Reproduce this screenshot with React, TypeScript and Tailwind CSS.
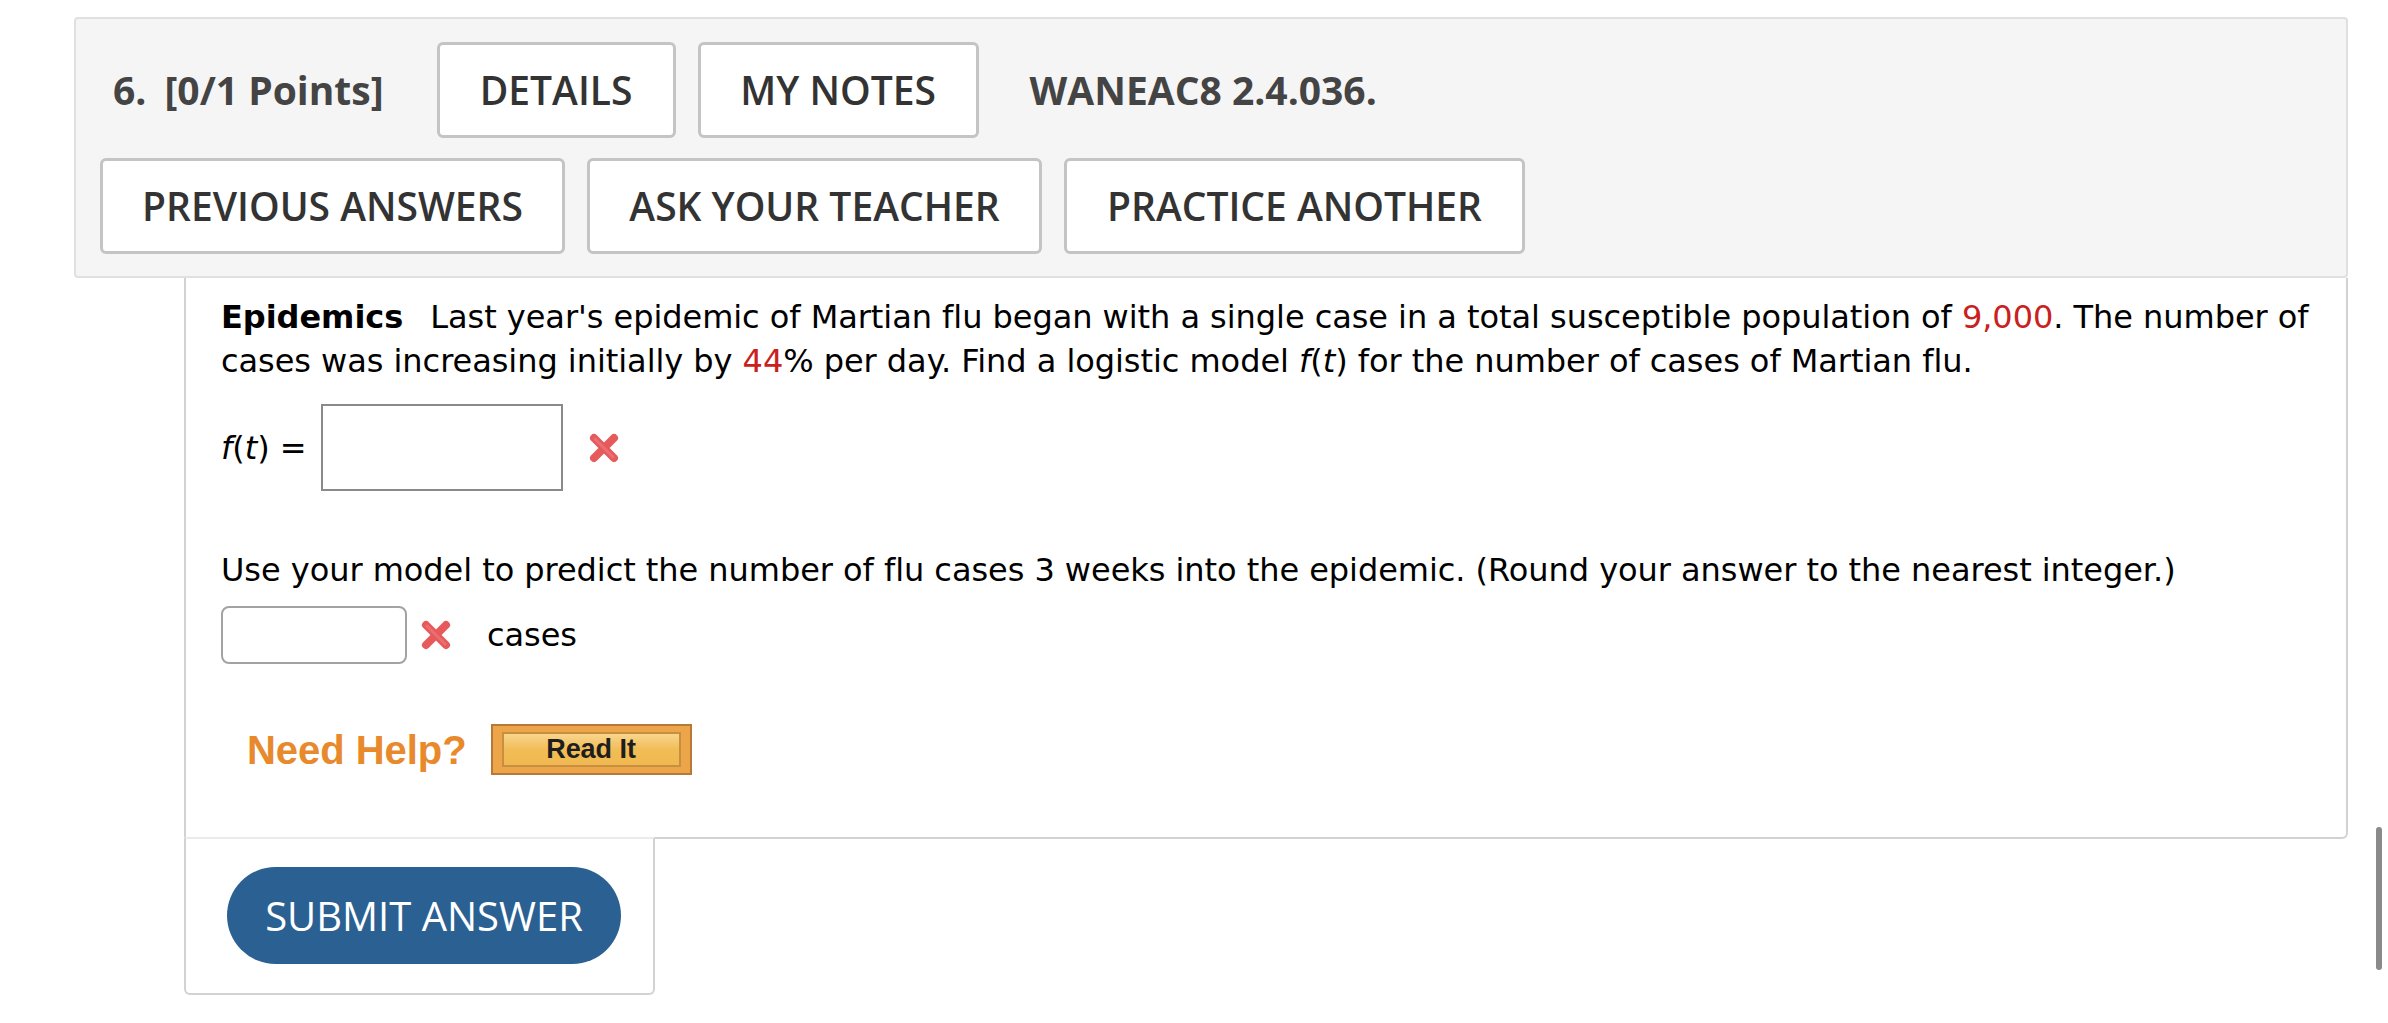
import React from 'react';

const headerFont = { fontFamily: '"Open Sans", "Noto Sans", sans-serif' };
const bodyFont = { fontFamily: '"DejaVu Sans", Verdana, sans-serif' };
const arialFont = { fontFamily: '"Liberation Sans", Arial, sans-serif' };

function ToolButton({ label, width }: { label: string; width: string }) {
  return (
    <div
      className={`${width} h-[96px] flex items-center justify-center bg-white border-[3px] border-[#c4c4c4] rounded-[6px] text-[39px] font-semibold text-[#333]`}
    >
      {label}
    </div>
  );
}

function WrongMark() {
  return (
    <svg width="34" height="32" viewBox="0 0 34 32" className="shrink-0">
      <g stroke="#e65a5c" strokeWidth="8" strokeLinecap="round">
        <line x1="7" y1="6" x2="27" y2="26" />
        <line x1="27" y1="6" x2="7" y2="26" />
      </g>
      <g stroke="#f07c7e" strokeWidth="3" strokeLinecap="round" opacity="0.6">
        <line x1="8" y1="7" x2="26" y2="25" />
      </g>
    </svg>
  );
}

export default function App() {
  return (
    <div className="relative w-full h-[1023px] bg-white overflow-hidden">
      {/* question header */}
      <div
        className="ml-[74px] mt-[17px] w-[2274px] h-[261px] bg-[#f5f5f5] border-2 border-[#e0e0e0] rounded-[4px] pt-[23px] pl-[24px]"
        style={headerFont}
      >
        <div className="flex items-center h-[96px]">
          <span className="ml-[13px] text-[39px] font-bold text-[#444]">6.</span>
          <span className="ml-[18px] text-[39px] font-bold text-[#444]">[0/1 Points]</span>
          <div className="ml-[53px] flex gap-[22px]">
            <ToolButton label="DETAILS" width="w-[239px]" />
            <ToolButton label="MY NOTES" width="w-[281px]" />
          </div>
          <span className="ml-[51px] text-[39px] font-bold text-[#444]">WANEAC8 2.4.036.</span>
        </div>
        <div className="mt-[20px] flex gap-[22px]">
          <ToolButton label="PREVIOUS ANSWERS" width="w-[465px]" />
          <ToolButton label="ASK YOUR TEACHER" width="w-[455px]" />
          <ToolButton label="PRACTICE ANOTHER" width="w-[461px]" />
        </div>
      </div>

      {/* question body */}
      <div
        className="ml-[184px] w-[2164px] border-x-2 border-b-2 border-[#d2d2d2] rounded-br-[6px] pl-[35px] pt-[17px] pb-[62px] text-[32px] tracking-[-0.05px] text-black"
        style={bodyFont}
      >
        <p className="leading-[44px]">
          <b>Epidemics</b>
          <span className="ml-[27px]">Last year's epidemic of Martian flu began with a single case in a total susceptible population of </span>
          <span className="text-[#c9211e]">9,000</span>. The number of cases was increasing initially by{' '}
          <span className="text-[#c9211e]">44</span>% per day. Find a logistic model <i>f</i>(<i>t</i>) for the number of cases of Martian flu.
        </p>

        <div className="mt-[21px] flex items-center h-[87px]">
          <span>
            <i>f</i>(<i>t</i>) =
          </span>
          <div className="ml-[15px] w-[242px] h-[87px] bg-white border-2 border-[#8a8a8a]" />
          <div className="ml-[24px]">
            <WrongMark />
          </div>
        </div>

        <p className="mt-[57px] leading-[44px]">
          Use your model to predict the number of flu cases 3 weeks into the epidemic. (Round your answer to the nearest integer.)
        </p>

        <div className="mt-[14px] flex items-center h-[58px]">
          <div className="w-[186px] h-[58px] bg-white border-2 border-[#a3a3a3] rounded-[8px]" />
          <div className="ml-[12px]">
            <WrongMark />
          </div>
          <span className="ml-[34px]">cases</span>
        </div>

        <div className="mt-[60px] flex items-center h-[51px]">
          <span className="ml-[26px] text-[40px] font-bold text-[#e8892c]" style={arialFont}>
            Need Help?
          </span>
          <div className="ml-[24px] w-[201px] h-[51px] bg-[#eda54a] border-2 border-[#b6793a] px-[9px] py-[6px]">
            <div
              className="h-full bg-gradient-to-b from-[#f8d58c] via-[#f2bd56] to-[#f0b850] border-2 border-[#c98f40] flex items-center justify-center text-[27px] font-bold text-[#1e1e1e]"
              style={arialFont}
            >
              Read It
            </div>
          </div>
        </div>
      </div>

      {/* submit area */}
      <div className="-mt-[2px] ml-[184px] w-[471px] h-[158px] border-x-2 border-b-2 border-t-2 border-[#d2d2d2] border-t-[#ebebeb] rounded-b-[6px] bg-white pl-[41px] pt-[28px]">
        <div
          className="w-[394px] h-[97px] rounded-full bg-[#2a6192] flex items-center justify-center text-[40px] font-medium text-white"
          style={headerFont}
        >
          SUBMIT ANSWER
        </div>
      </div>

      {/* overlay scrollbar thumb */}
      <div className="absolute right-[6px] top-[827px] w-[6px] h-[143px] rounded-full bg-[#8a8a8a]" />
    </div>
  );
}
